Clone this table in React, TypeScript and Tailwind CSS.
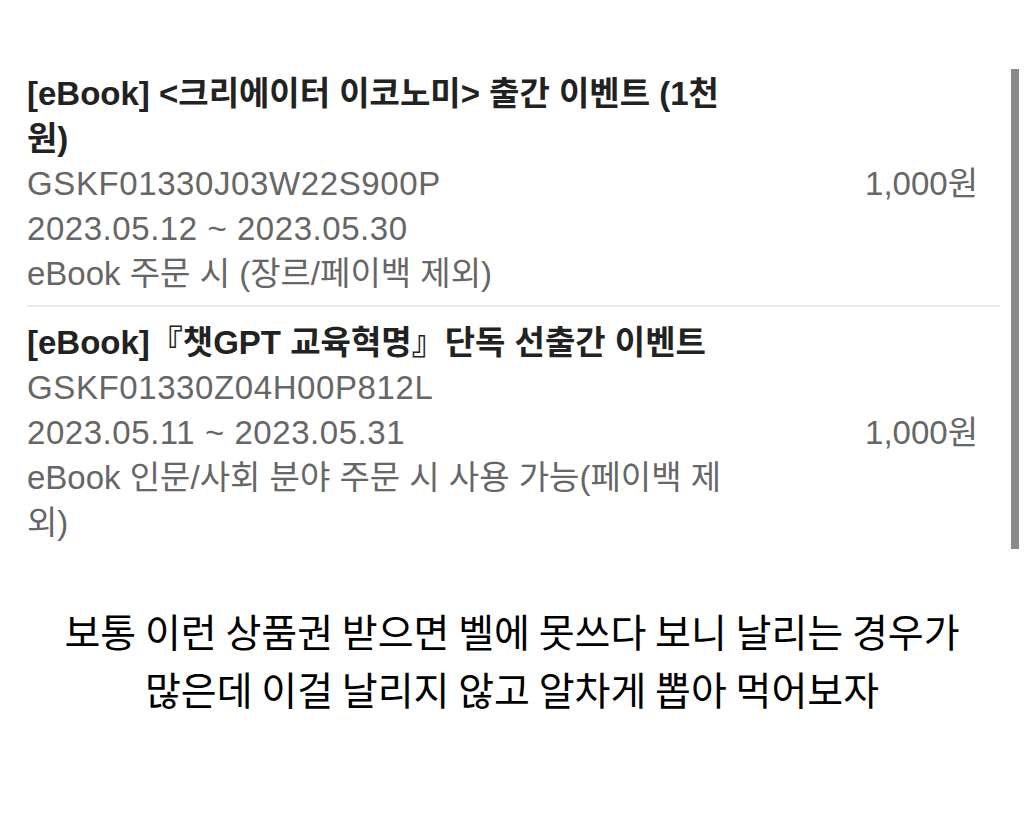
const coupons = [
  {
    title: '[eBook] <크리에이터 이코노미> 출간 이벤트 (1천원)',
    code: 'GSKF01330J03W22S900P',
    period: '2023.05.12 ~ 2023.05.30',
    note: 'eBook 주문 시 (장르/페이백 제외)',
    amount: '1,000원',
  },
  {
    title: '[eBook]『챗GPT 교육혁명』단독 선출간 이벤트',
    code: 'GSKF01330Z04H00P812L',
    period: '2023.05.11 ~ 2023.05.31',
    note: 'eBook 인문/사회 분야 주문 시 사용 가능(페이백 제외)',
    amount: '1,000원',
  },
];

const font = { fontFamily: '"Liberation Sans", "Noto Sans CJK KR", sans-serif' };

export default function App() {
  return (
    <div className="h-[822px] w-[1024px] overflow-hidden bg-white">
      <div className="flex pl-[27px] pr-[5px] pt-[69px]" style={font}>
        <div className="flex-1">
          {coupons.map((c, i) => (
            <div
              key={c.code}
              className={
                i === 0
                  ? 'flex items-center border-b-2 border-[#ececec] pb-[9px] pt-[2px]'
                  : 'flex items-center pt-[13px]'
              }
            >
              <div className="w-[725px] text-[33px] leading-[45px]">
                <div className="font-bold text-[#222]">{c.title}</div>
                <div className="tracking-[0.6px] text-[#666]">{c.code}</div>
                <div className="tracking-[0.55px] text-[#666]">{c.period}</div>
                <div className="text-[#666]">{c.note}</div>
              </div>
              <div className="ml-auto pr-[22px] text-[33px] text-[#666]">{c.amount}</div>
            </div>
          ))}
        </div>
        <div className="ml-[11px] h-[480px] w-[8px] bg-[#8a8a8a]" />
      </div>
      <div
        className="mt-[52px] text-center text-[39px] leading-[58px] text-black"
        style={{ fontFamily: '"Noto Sans CJK KR", sans-serif' }}
      >
        <p>보통 이런 상품권 받으면 벨에 못쓰다 보니 날리는 경우가</p>
        <p>많은데 이걸 날리지 않고 알차게 뽑아 먹어보자</p>
      </div>
    </div>
  );
}
